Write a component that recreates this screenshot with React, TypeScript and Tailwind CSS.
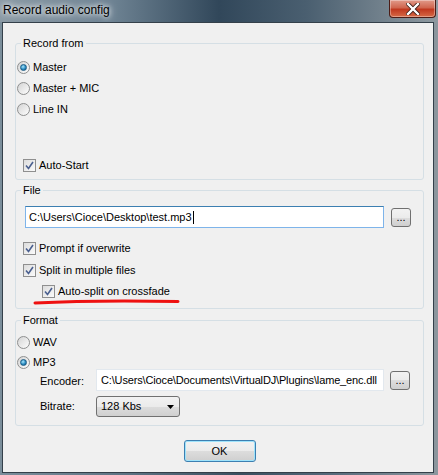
import React from "react";

function Radio({ checked, label }: { checked?: boolean; label: string }) {
  return (
    <div className="flex h-[14px] items-center">
      <span className="flex h-[13px] w-[13px] items-center justify-center rounded-full border border-[#8e8f8f] bg-[linear-gradient(135deg,#d4d4d4,#fdfdfd)]">
        {checked && (
          <span className="h-[7px] w-[7px] rounded-full border border-[#1b5d86] bg-[radial-gradient(circle_at_40%_35%,#a9e6fb,#2a8bc2_55%,#0c4e78)]" />
        )}
      </span>
      <span className="ml-[3px]">{label}</span>
    </div>
  );
}

function Check({ label, className = "" }: { label: string; className?: string }) {
  return (
    <div className={`flex h-[14px] items-center ${className}`}>
      <span className="flex h-[13px] w-[13px] items-center justify-center border border-[#8f8f8f] bg-[linear-gradient(135deg,#dcdcdc,#fbfbfb)]">
        <svg width="9" height="9" viewBox="0 0 9 9">
          <path d="M1 4.5 L3.5 7.5 L8 1" fill="none" stroke="#4a5f8f" strokeWidth="1.6" />
        </svg>
      </span>
      <span className="ml-[3px]">{label}</span>
    </div>
  );
}

function Browse({ className = "" }: { className?: string }) {
  return (
    <button className={`flex h-[19px] w-[20px] items-end justify-center rounded-[3px] border border-[#707070] bg-[linear-gradient(#f2f2f2,#ebebeb_50%,#dddddd_50%,#cfcfcf)] pb-[3px] text-[11px] leading-none ${className}`}>
      ...
    </button>
  );
}

function Group({ title, children, className = "" }: { title: string; children: React.ReactNode; className?: string }) {
  return (
    <fieldset className={`rounded-[3px] border border-[#d5dfe5] ${className}`}>
      <legend className="ml-[5px] px-[2px] text-[11px] leading-[13px]">{title}</legend>
      {children}
    </fieldset>
  );
}

export default function App() {
  return (
    <div className="flex h-[475px] w-[438px] flex-col bg-[linear-gradient(90deg,#7b8e9b,#5d7282_30%,#3a4f5f_55%,#56697a_75%,#8d979e)] font-['Liberation_Sans',Arial,sans-serif] text-[11px] text-black">
      <div className="flex h-[22px] shrink-0 items-start justify-between bg-[linear-gradient(90deg,#8b9aa5,#6f8494_25%,#31475a_50%,#4a5f70_70%,#8f9aa1)]">
        <span className="ml-[3px] mt-[3px] text-[12px] leading-[14px] [text-shadow:0_0_5px_#ffffff,0_0_8px_#ffffff]">
          Record audio config
        </span>
        <div className="mr-[2px] flex h-[18px] w-[47px] items-center justify-center rounded-b-[4px] border border-t-0 border-[#4b1c16] bg-[linear-gradient(#e19a8a,#d0664f_45%,#c0381f_55%,#d66a46)] shadow-[inset_0_0_0_1px_rgba(255,255,255,0.35)]">
          <svg width="14" height="12" viewBox="0 0 14 12">
            <path d="M2 1 L12 11 M12 1 L2 11" stroke="#3a1a14" strokeWidth="4" strokeLinecap="square" />
            <path d="M2 1 L12 11 M12 1 L2 11" stroke="#ffffff" strokeWidth="2.4" strokeLinecap="square" />
          </svg>
        </div>
      </div>

      <div className="mb-[2px] ml-[2px] mr-[4px] flex flex-1 flex-col border border-[#34404a] bg-[#f0f0f0] pl-[12px] pr-[9px] pt-[14px]">
        <Group title="Record from" className="pb-[7px]">
          <div className="ml-[1px] mt-[10px] flex flex-col gap-[7px]">
            <Radio checked label="Master" />
            <Radio label="Master + MIC" />
            <Radio label="Line IN" />
          </div>
          <Check label="Auto-Start" className="ml-[7px] mt-[42px]" />
        </Group>

        <Group title="File" className="mt-[4px] pb-[10px]">
          <div className="ml-[9px] mt-[9px] flex items-center">
            <div className="flex h-[22px] w-[359px] items-center border border-[#7eb4ea] border-t-[#3c7fb1] bg-white pl-[3px]">
              <span>C:\Users\Cioce\Desktop\test.mp3</span>
              <span className="ml-px h-[13px] w-px bg-black" />
            </div>
            <Browse className="ml-[7px]" />
          </div>
          <Check label="Prompt if overwrite" className="ml-[7px] mt-[13px]" />
          <Check label="Split in multiple files" className="ml-[7px] mt-[8px]" />
          <div className="relative">
            <Check label="Auto-split on crossfade" className="ml-[26px] mt-[7px]" />
            <svg className="absolute left-[17px] top-[14px]" width="148" height="8" viewBox="0 0 148 8">
              <path d="M2 5 Q60 2 145 3.5" fill="none" stroke="#ee1111" strokeWidth="3" strokeLinecap="round" />
            </svg>
          </div>
        </Group>

        <Group title="Format" className="mt-[5px] pb-[8px]">
          <div className="ml-[1px] mt-[8px] flex flex-col gap-[6px]">
            <Radio label="WAV" />
            <Radio checked label="MP3" />
          </div>
          <div className="ml-[24px] flex h-[22px] items-center">
            <span className="mt-[3px] w-[56px]">Encoder:</span>
            <div className="flex h-[22px] w-[288px] items-center border border-[#e2e8ee] bg-white pl-[4px] tracking-[-0.15px]">
              C:\Users\Cioce\Documents\VirtualDJ\Plugins\lame_enc.dll
            </div>
            <Browse className="ml-[6px]" />
          </div>
          <div className="ml-[24px] mt-[5px] flex h-[21px] items-center">
            <span className="w-[56px]">Bitrate:</span>
            <div className="flex h-[21px] w-[84px] items-center justify-between rounded-[3px] border border-[#707070] bg-[linear-gradient(#f2f2f2,#ebebeb_50%,#dddddd_50%,#cfcfcf)] pl-[4px] pr-[5px]">
              <span>128 Kbs</span>
              <svg width="7" height="4" viewBox="0 0 7 4">
                <path d="M0 0 H7 L3.5 4 Z" fill="#000" />
              </svg>
            </div>
          </div>
        </Group>

        <div className="mt-[14px] flex justify-center">
          <button className="h-[22px] w-[72px] rounded-[3px] border border-[#3c7fb1] bg-[linear-gradient(#f2f2f2,#ebebeb_50%,#dddddd_50%,#cfcfcf)] text-[11px] shadow-[inset_0_0_0_1px_#9fe3fb]">
            OK
          </button>
        </div>
      </div>
    </div>
  );
}
